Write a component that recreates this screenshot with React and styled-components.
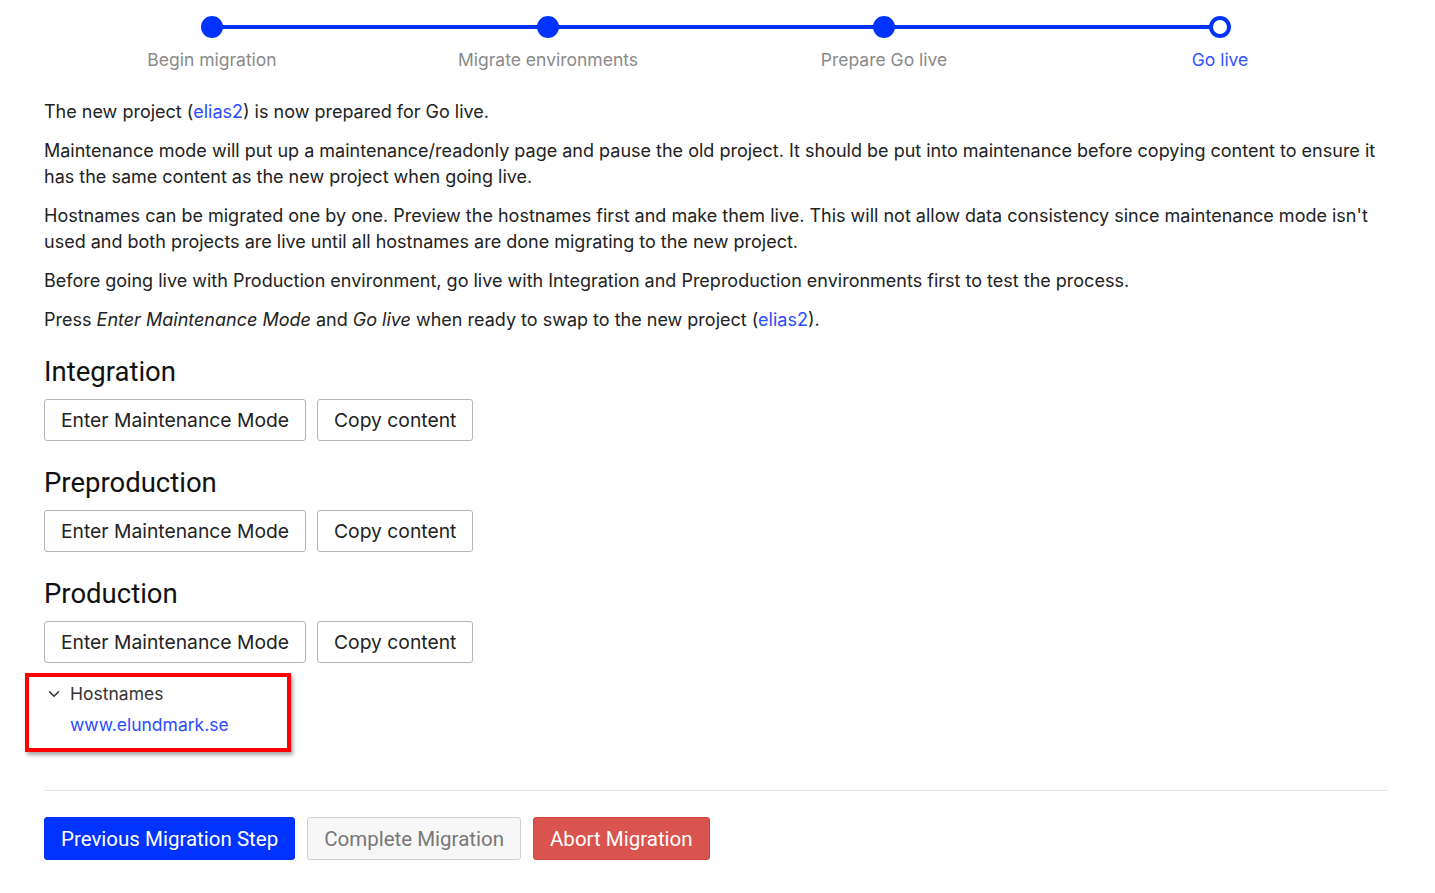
import React from "react";
import styled, { createGlobalStyle } from "styled-components";

const GlobalStyle = createGlobalStyle`
  body {
    margin: 0;
    background: #fff;
    font-family: Inter, "Noto Sans", sans-serif;
    color: #222;
  }
`;

const Page = styled.div`
  padding: 0 47px 0 44px;
`;

const Stepper = styled.div`
  display: grid;
  grid-template-columns: repeat(4, 1fr);
  position: relative;
  padding-top: 16px;
`;

const StepLine = styled.div`
  position: absolute;
  top: 25px;
  left: 12.5%;
  right: 12.5%;
  height: 4px;
  background: #0033ff;
`;

const Step = styled.div`
  display: flex;
  flex-direction: column;
  align-items: center;
  position: relative;
`;

const Dot = styled.span`
  width: 22px;
  height: 22px;
  box-sizing: border-box;
  border-radius: 50%;
  background: ${(p) => (p.$open ? "#fff" : "#0033ff")};
  border: 4px solid #0033ff;
`;

const StepLabel = styled.span`
  margin-top: 11px;
  font-size: 17.5px;
  color: ${(p) => (p.$active ? "#3355ff" : "#8a8a8a")};
`;

const Body = styled.div`
  padding-top: 29px;
`;

const Para = styled.p`
  margin: 0 0 13px;
  font-size: 18px;
  line-height: 26px;
`;

const Link = styled.a`
  color: #2b4bff;
  text-decoration: none;
`;

const Section = styled.section`
  & + & {
    padding-top: 3px;
  }
`;

const SectionTitle = styled.h3`
  margin: 24px 0 12px;
  font-family: Roboto, "Liberation Sans", sans-serif;
  font-weight: 400;
  font-size: 27.5px;
  line-height: 30px;
  color: #111;
`;

const ButtonRow = styled.div`
  display: flex;
  gap: 11px;
`;

const OutlineButton = styled.button`
  height: 42px;
  padding: 0 16px;
  background: #fff;
  border: 1px solid #b5b5b5;
  border-radius: 3px;
  font-family: Inter, "Noto Sans", sans-serif;
  font-size: 19.3px;
  color: #222;
`;

const HostBox = styled.div`
  margin: 10px 0 0 -19px;
  width: 242px;
  height: 65px;
  border: 4px solid #f00;
  box-shadow: 2px 3px 4px rgba(0, 0, 0, 0.35);
  padding: 6px 0 0 16px;
  box-sizing: content-box;
`;

const HostHeader = styled.div`
  display: flex;
  align-items: center;
  gap: 7px;
  font-size: 17.5px;
  color: #333;
  line-height: 22px;
`;

const HostLink = styled(Link)`
  display: block;
  margin: 9px 0 0 25px;
  font-size: 17.5px;
  line-height: 22px;
`;

const Divider = styled.hr`
  margin: 38px 0 26px;
  border: none;
  border-top: 1px solid #e6e6e6;
`;

const Footer = styled.div`
  display: flex;
  gap: 12px;
`;

const ActionButton = styled.button`
  height: 43px;
  padding: 0 16px;
  border-radius: 3px;
  font-family: Roboto, "Liberation Sans", sans-serif;
  font-size: 20.5px;
  border: 1px solid
    ${(p) =>
      p.$variant === "primary" ? "#0033ff" : p.$variant === "danger" ? "#d4443f" : "#cfcfcf"};
  background: ${(p) =>
    p.$variant === "primary" ? "#0033ff" : p.$variant === "danger" ? "#d9534f" : "#f7f7f7"};
  color: ${(p) => (p.$variant ? "#fff" : "#777")};
`;

const steps = ["Begin migration", "Migrate environments", "Prepare Go live", "Go live"];
const environments = ["Integration", "Preproduction", "Production"];

const Chevron = () => (
  <svg width="18" height="18" viewBox="0 0 24 24" fill="none" stroke="#333" strokeWidth="2" strokeLinecap="round" strokeLinejoin="round">
    <path d="M6 9l6 6 6-6" />
  </svg>
);

export default function App() {
  return (
    <Page>
      <GlobalStyle />
      <Stepper>
        <StepLine />
        {steps.map((s, i) => (
          <Step key={s}>
            <Dot $open={i === steps.length - 1} />
            <StepLabel $active={i === steps.length - 1}>{s}</StepLabel>
          </Step>
        ))}
      </Stepper>
      <Body>
        <Para>
          The new project (<Link href="#">elias2</Link>) is now prepared for Go live.
        </Para>
        <Para>
          Maintenance mode will put up a maintenance/readonly page and pause the old project. It should be put into
          maintenance before copying content to ensure it has the same content as the new project when going live.
        </Para>
        <Para>
          Hostnames can be migrated one by one. Preview the hostnames first and make them live. This will not allow
          data consistency since maintenance mode isn't used and both projects are live until all hostnames are done
          migrating to the new project.
        </Para>
        <Para>
          Before going live with Production environment, go live with Integration and Preproduction environments first
          to test the process.
        </Para>
        <Para>
          Press <em>Enter Maintenance Mode</em> and <em>Go live</em> when ready to swap to the new project (
          <Link href="#">elias2</Link>).
        </Para>
        {environments.map((env) => (
          <Section key={env}>
            <SectionTitle>{env}</SectionTitle>
            <ButtonRow>
              <OutlineButton>Enter Maintenance Mode</OutlineButton>
              <OutlineButton>Copy content</OutlineButton>
            </ButtonRow>
          </Section>
        ))}
        <HostBox>
          <HostHeader>
            <Chevron />
            Hostnames
          </HostHeader>
          <HostLink href="#">www.elundmark.se</HostLink>
        </HostBox>
        <Divider />
        <Footer>
          <ActionButton $variant="primary">Previous Migration Step</ActionButton>
          <ActionButton>Complete Migration</ActionButton>
          <ActionButton $variant="danger">Abort Migration</ActionButton>
        </Footer>
      </Body>
    </Page>
  );
}
